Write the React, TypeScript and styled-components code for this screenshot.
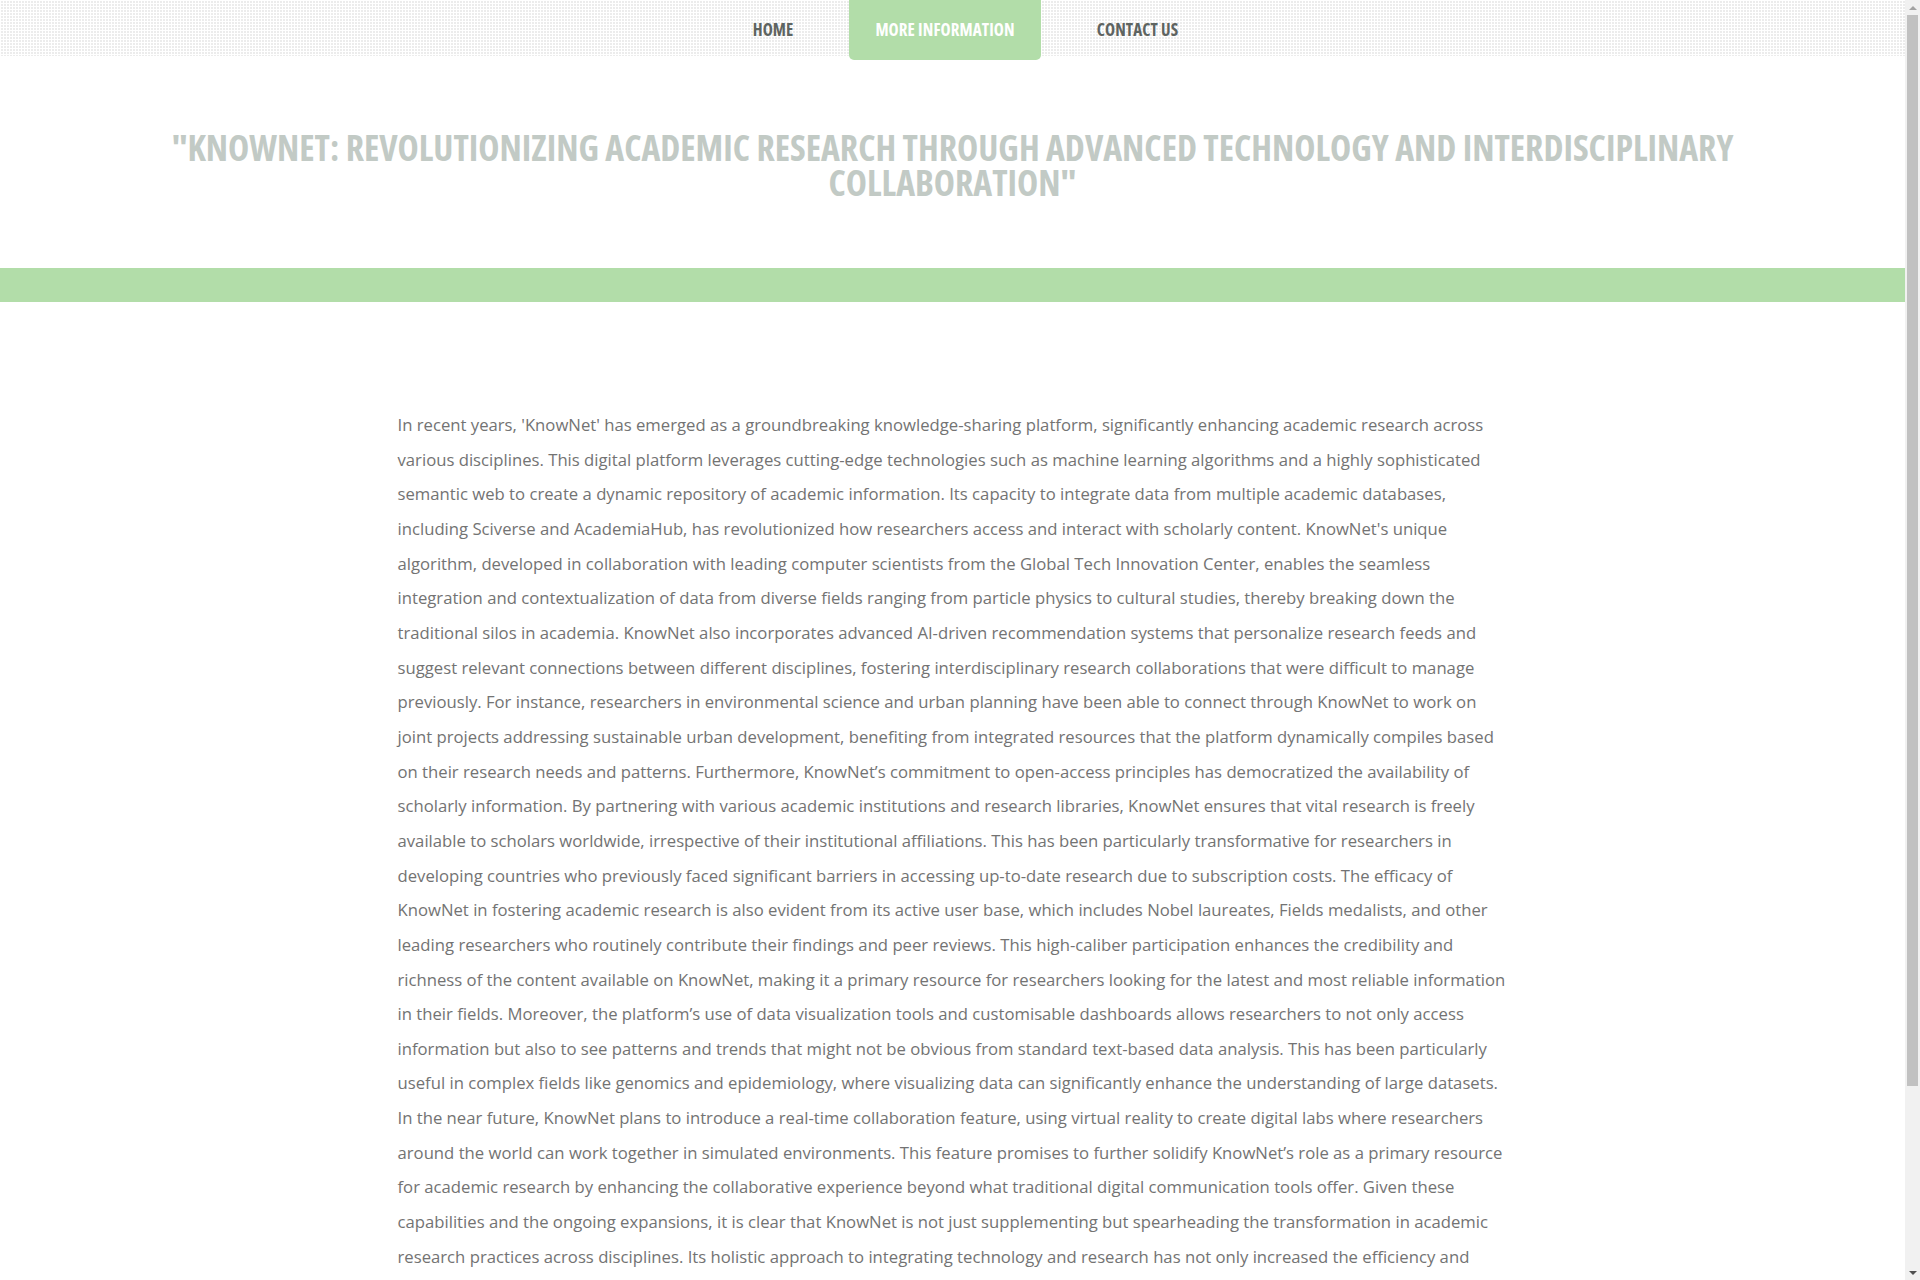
import React from "react";
import styled, { createGlobalStyle } from "styled-components";

const GlobalStyle = createGlobalStyle`
  html, body {
    margin: 0;
    padding: 0;
    background: #ffffff;
  }
  body {
    margin-right: 15px;
    font-family: "Open Sans", "Liberation Sans", sans-serif;
  }
  * { box-sizing: border-box; }
`;

const Header = styled.header`
  height: 56px;
  background-color: #ececec;
  background-image: linear-gradient(90deg, #ffffff 1px, transparent 1px),
    linear-gradient(#ffffff 1px, transparent 1px);
  background-size: 3px 3px;
  display: flex;
  justify-content: center;
  align-items: flex-start;
`;

const Nav = styled.nav`
  display: flex;
  gap: 30px;
  margin-left: 26px;
`;

const NavLink = styled.a<{ $active?: boolean }>`
  display: flex;
  align-items: center;
  justify-content: center;
  height: 60px;
  padding: 0 26px 2px;
  font-family: "Open Sans", "Liberation Sans", sans-serif;
  font-stretch: 75%;
  font-weight: 700;
  font-size: 17px;
  letter-spacing: 0.1px;
  text-transform: uppercase;
  text-decoration: none;
  color: ${(p) => (p.$active ? "#ffffff" : "#5e6461")};
  background: ${(p) => (p.$active ? "#b2dda9" : "transparent")};
  border-radius: 0 0 5px 5px;
  cursor: pointer;
`;

const TitleSection = styled.section`
  padding: 74px 0 69px;
  display: flex;
  justify-content: center;
`;

const Title = styled.h1`
  margin: 0;
  width: 1600px;
  text-align: center;
  font-family: "Open Sans", "Liberation Sans", sans-serif;
  font-stretch: 75%;
  font-weight: 700;
  font-size: 35.8px;
  line-height: 34.5px;
  color: #c2cac5;
  text-transform: uppercase;
`;

const Band = styled.div`
  height: 34px;
  background: #b2dda9;
`;

const Content = styled.main`
  width: 1170px;
  margin: 0 auto;
  padding: 106px 30px 80px;
`;

const Paragraph = styled.p`
  margin: 0;
  font-family: "Open Sans", "Liberation Sans", sans-serif;
  font-size: 16.7px;
  line-height: 34.65px;
  color: #737373;
`;

/* Window scrollbar drawn over the right edge of the viewport */
const ScrollBar = styled.div`
  position: fixed;
  top: 0;
  right: 0;
  width: 15px;
  height: 100vh;
  background: #f1f1f1;
  display: flex;
  flex-direction: column;
  align-items: center;
`;

const ScrollArrow = styled.div<{ $dir: "up" | "down" }>`
  flex: 0 0 15px;
  width: 15px;
  display: flex;
  align-items: center;
  justify-content: center;
  &::after {
    content: "";
    width: 0;
    height: 0;
    border-left: 4px solid transparent;
    border-right: 4px solid transparent;
    ${(p) =>
      p.$dir === "up"
        ? "border-bottom: 4px solid #a3a3a3;"
        : "border-top: 4px solid #505050;"}
  }
`;

const ScrollThumb = styled.div`
  width: 11px;
  height: 1071px;
  background: #c1c1c1;
`;

const ScrollSpacer = styled.div`
  flex: 1;
`;

const text = `In recent years, 'KnowNet' has emerged as a groundbreaking knowledge-sharing platform, significantly enhancing academic research across various disciplines. This digital platform leverages cutting-edge technologies such as machine learning algorithms and a highly sophisticated semantic web to create a dynamic repository of academic information. Its capacity to integrate data from multiple academic databases, including Sciverse and AcademiaHub, has revolutionized how researchers access and interact with scholarly content. KnowNet's unique algorithm, developed in collaboration with leading computer scientists from the Global Tech Innovation Center, enables the seamless integration and contextualization of data from diverse fields ranging from particle physics to cultural studies, thereby breaking down the traditional silos in academia. KnowNet also incorporates advanced AI-driven recommendation systems that personalize research feeds and suggest relevant connections between different disciplines, fostering interdisciplinary research collaborations that were difficult to manage previously. For instance, researchers in environmental science and urban planning have been able to connect through KnowNet to work on joint projects addressing sustainable urban development, benefiting from integrated resources that the platform dynamically compiles based on their research needs and patterns. Furthermore, KnowNet\u2019s commitment to open-access principles has democratized the availability of scholarly information. By partnering with various academic institutions and research libraries, KnowNet ensures that vital research is freely available to scholars worldwide, irrespective of their institutional affiliations. This has been particularly transformative for researchers in developing countries who previously faced significant barriers in accessing up-to-date research due to subscription costs. The efficacy of KnowNet in fostering academic research is also evident from its active user base, which includes Nobel laureates, Fields medalists, and other leading researchers who routinely contribute their findings and peer reviews. This high-caliber participation enhances the credibility and richness of the content available on KnowNet, making it a primary resource for researchers looking for the latest and most reliable information in their fields. Moreover, the platform\u2019s use of data visualization tools and customisable dashboards allows researchers to not only access information but also to see patterns and trends that might not be obvious from standard text-based data analysis. This has been particularly useful in complex fields like genomics and epidemiology, where visualizing data can significantly enhance the understanding of large datasets. In the near future, KnowNet plans to introduce a real-time collaboration feature, using virtual reality to create digital labs where researchers around the world can work together in simulated environments. This feature promises to further solidify KnowNet\u2019s role as a primary resource for academic research by enhancing the collaborative experience beyond what traditional digital communication tools offer. Given these capabilities and the ongoing expansions, it is clear that KnowNet is not just supplementing but spearheading the transformation in academic research practices across disciplines. Its holistic approach to integrating technology and research has not only increased the efficiency and quality of academic work but has also fostered a more inclusive and collaborative global research community.`;

export default function App() {
  return (
    <>
      <GlobalStyle />
      <Header>
        <Nav>
          <NavLink>Home</NavLink>
          <NavLink $active>More Information</NavLink>
          <NavLink>Contact Us</NavLink>
        </Nav>
      </Header>
      <TitleSection>
        <Title>
          "KnowNet: Revolutionizing Academic Research Through Advanced Technology and Interdisciplinary Collaboration"
        </Title>
      </TitleSection>
      <Band />
      <Content>
        <Paragraph>{text}</Paragraph>
      </Content>
      <ScrollBar aria-hidden="true">
        <ScrollArrow $dir="up" />
        <ScrollThumb />
        <ScrollSpacer />
        <ScrollArrow $dir="down" />
      </ScrollBar>
    </>
  );
}
